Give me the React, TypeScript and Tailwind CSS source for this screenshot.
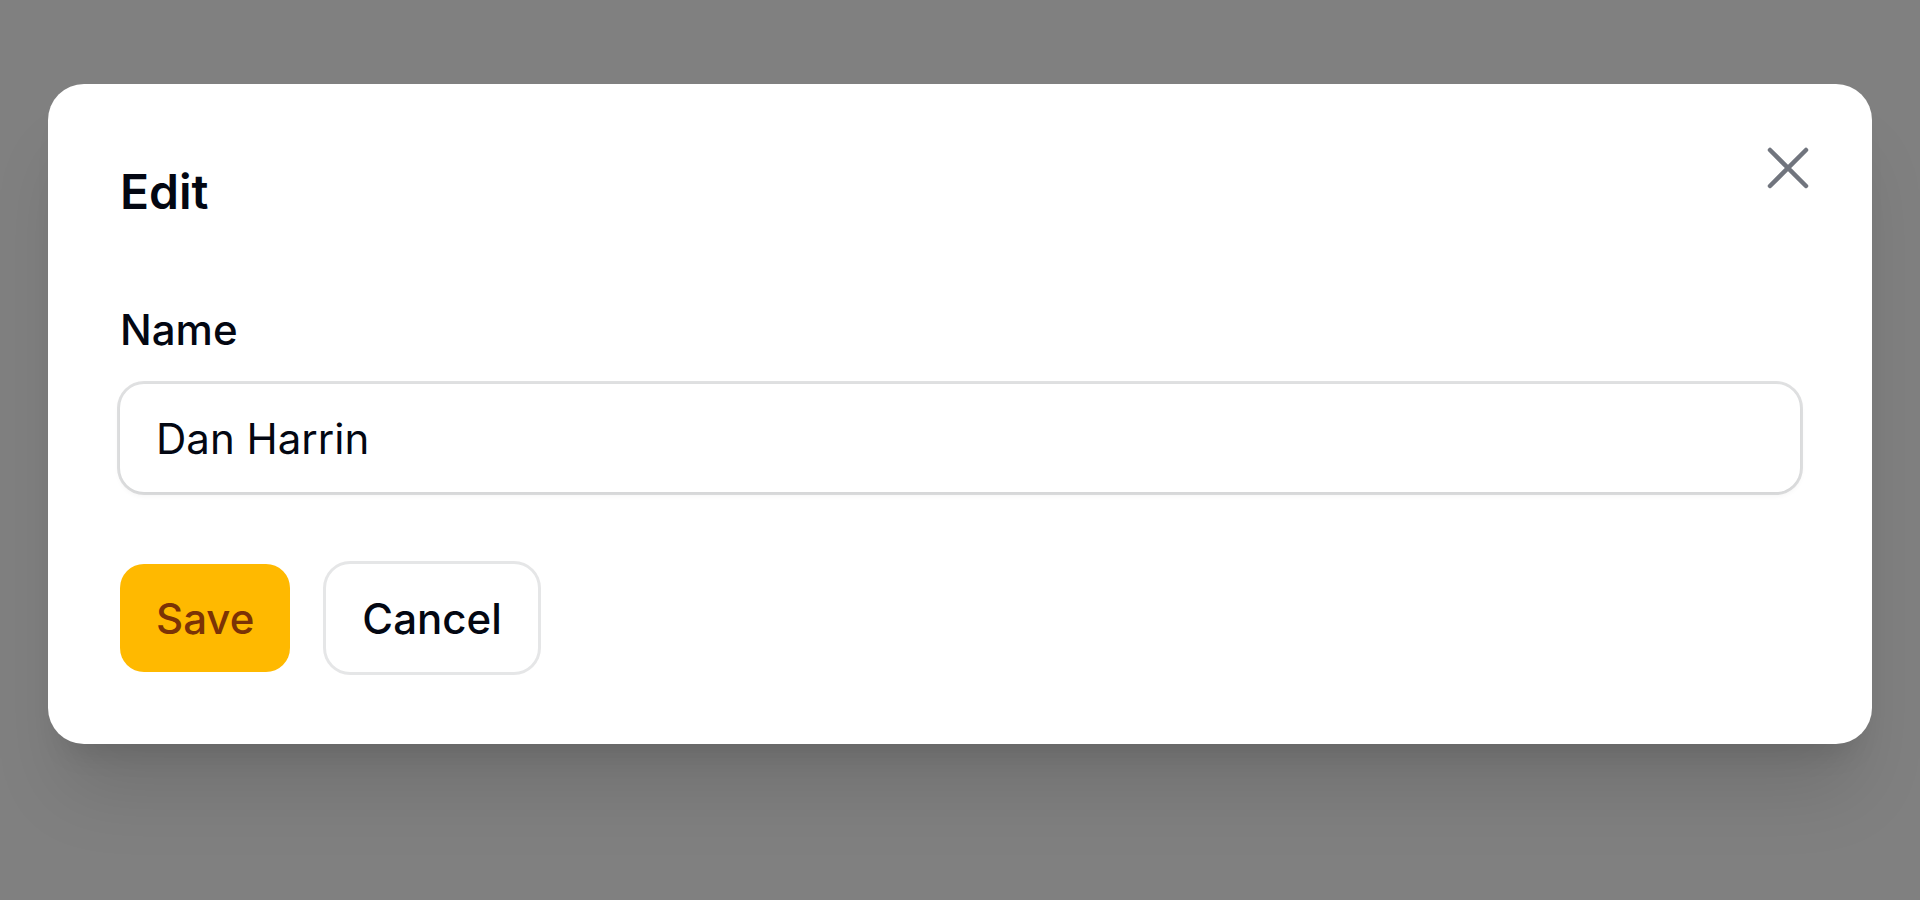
import React from "react";

export default function App() {
  return (
    <div
      className="w-[1920px] h-[900px] bg-[#808080] px-[48px] pt-[84px] overflow-hidden"
      style={{ fontFamily: "Inter, 'Noto Sans', sans-serif" }}
    >
      <div className="relative bg-white rounded-[36px] p-[72px] shadow-[0_60px_75px_-15px_rgba(0,0,0,0.12),0_24px_30px_-18px_rgba(0,0,0,0.12)]">
        <button
          type="button"
          className="absolute right-[48px] top-[48px] w-[72px] h-[72px] flex items-center justify-center"
          aria-label="Close"
        >
          <svg width="72" height="72" viewBox="0 0 72 72" fill="none">
            <path
              d="M18 18 L54 54 M54 18 L18 54"
              stroke="#71757e"
              strokeWidth="4.5"
              strokeLinecap="round"
            />
          </svg>
        </button>

        <h2 className="text-[48px] leading-[72px] font-semibold text-[#030712]">Edit</h2>

        <div className="mt-[72px]">
          <label className="block text-[42px] leading-[60px] font-medium text-[#030712]">Name</label>
          <div className="mt-[24px] h-[108px] rounded-[24px] bg-white flex items-center px-[36px] shadow-[0_0_0_3px_rgba(3,7,18,0.12),0_3px_6px_rgba(0,0,0,0.06)]">
            <span className="text-[42px] text-[#030712]">Dan Harrin</span>
          </div>
        </div>

        <div className="mt-[72px] flex gap-[36px]">
          <button
            type="button"
            className="h-[108px] px-[36px] rounded-[24px] bg-[#ffb900] text-[#7b3306] text-[42px] font-medium flex items-center"
          >
            Save
          </button>
          <button
            type="button"
            className="h-[108px] px-[36px] rounded-[24px] bg-white text-[#030712] text-[42px] font-medium flex items-center shadow-[0_0_0_3px_rgba(3,7,18,0.1)]"
          >
            Cancel
          </button>
        </div>
      </div>
    </div>
  );
}
